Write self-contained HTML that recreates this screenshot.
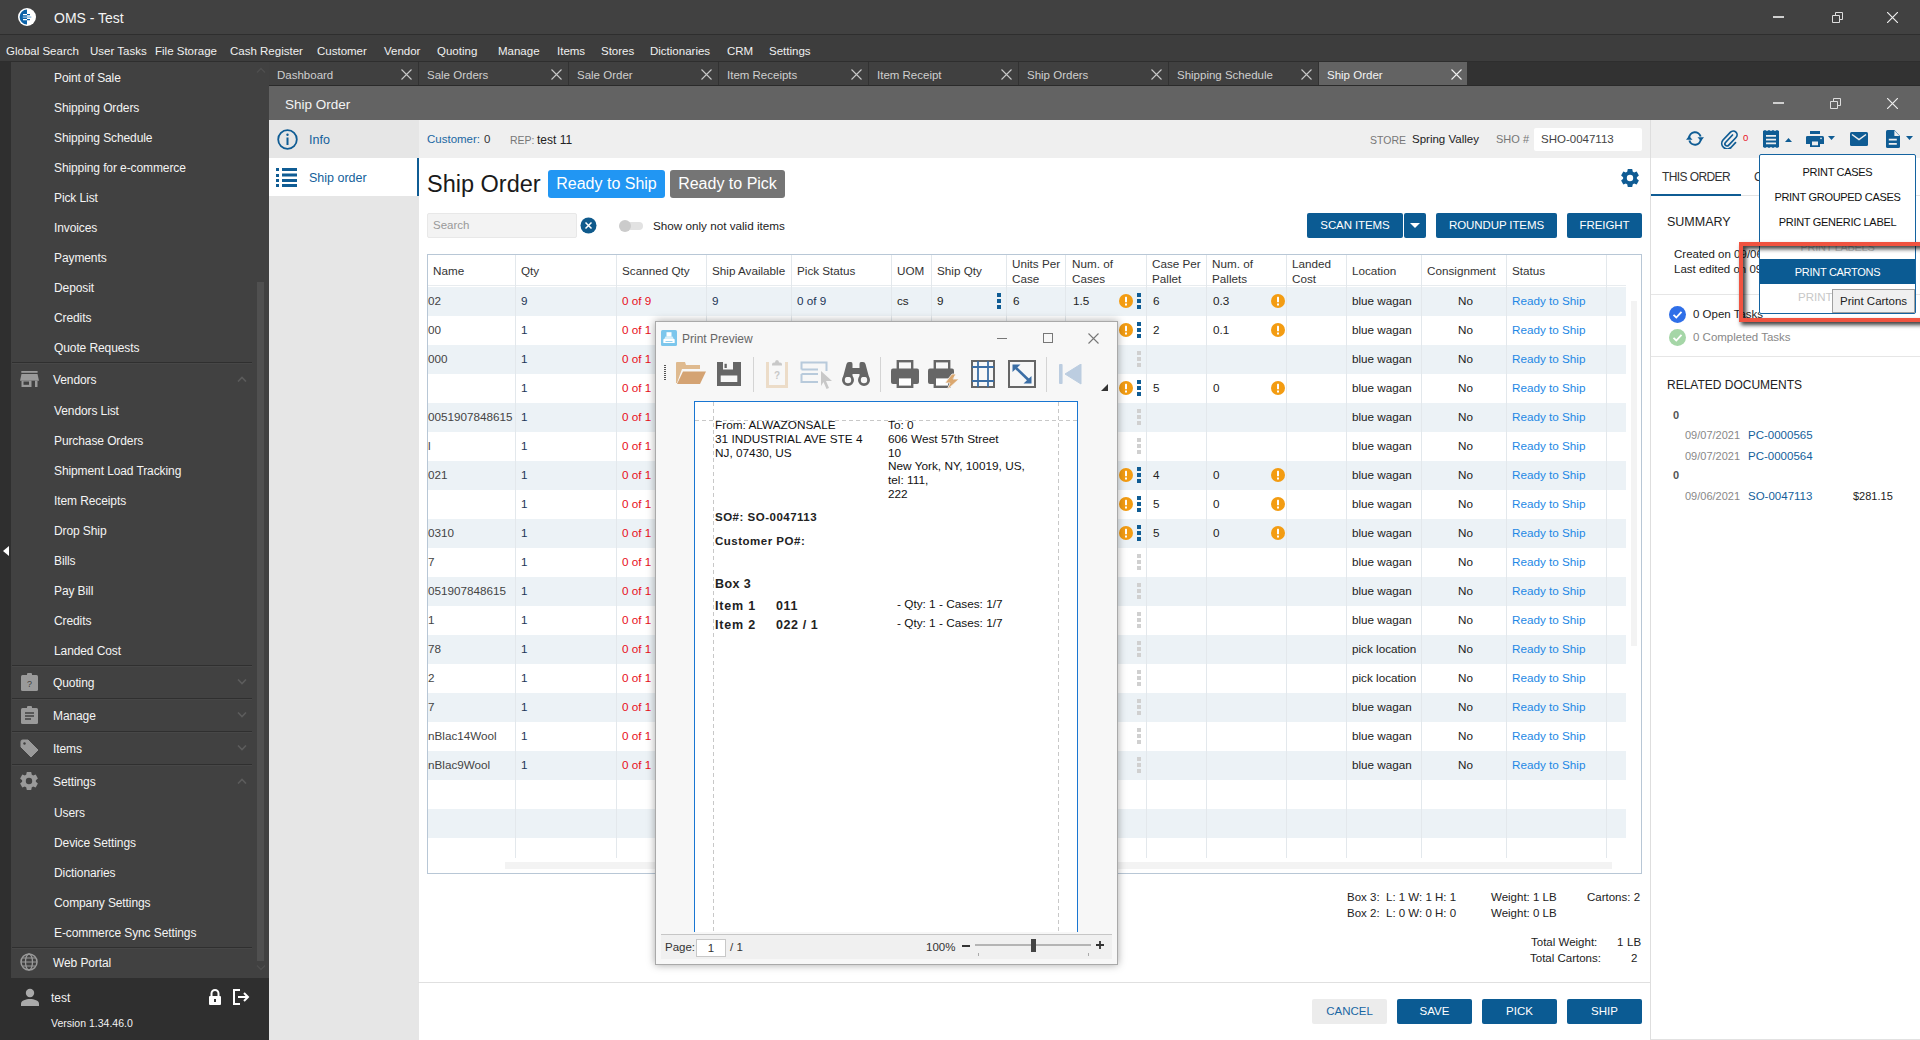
<!DOCTYPE html><html><head><meta charset="utf-8"><style>

*{margin:0;padding:0;box-sizing:border-box}
html,body{width:1920px;height:1040px;overflow:hidden;background:#fff;font-family:"Liberation Sans",sans-serif;font-size:12px;color:#222}
.a{position:absolute}
.t{position:absolute;white-space:nowrap;line-height:1}
#title{left:0;top:0;width:1920px;height:35px;background:#414141;border-bottom:1px solid #2e2e2e}
#menu{left:0;top:35px;width:1920px;height:27px;background:#3d3d3d;border-bottom:1px solid #2e2e2e}
#menu .t{color:#f0f0f0;font-size:11.5px;top:11px}
#strip{left:0;top:62px;width:11px;height:978px;background:#2f2f2f}
#side{left:11px;top:62px;width:258px;height:916px;background:#414141;overflow:hidden}
#side .t{color:#f4f4f4;font-size:12px;letter-spacing:-0.1px}
#side .sep{position:absolute;left:1px;width:240px;height:2px;border-top:1px solid #2f2f2f;border-bottom:1px solid #474747}
#user{left:11px;top:978px;width:258px;height:62px;background:#2f2f2f}
#tabs{left:269px;top:62px;width:1651px;height:24px;background:#323232;border-bottom:1px solid #2a2a2a}
.tab{position:absolute;top:0;height:23px;width:149px;background:#404040}
.tab .t{left:8px;top:8px;font-size:11.5px;color:#cfcfcf}
.tab svg{position:absolute;left:132px;top:7px}
#whdr{left:269px;top:86px;width:1651px;height:34px;background:#636363}


#nav{left:269px;top:120px;width:150px;height:920px;background:#e6e6e6}
#hstrip{left:419px;top:120px;width:1231px;height:38px;background:#efefef}
.btn{position:absolute;background:#0b5b93;color:#fff;border-radius:2px;font-size:11.5px;letter-spacing:-0.1px;text-align:center;line-height:25px;height:25px;top:213px}
.bbtn{position:absolute;background:#0b5b93;color:#fff;border-radius:2px;font-size:11.5px;text-align:center;line-height:25px;height:25px;top:999px}
#tbl{left:427px;top:254px;width:1215px;height:620px;border:1px solid #b8c7d6;background:#fff;overflow:hidden}
.row{position:absolute;left:0;width:1198px;height:29px}
.band{background:#ecf2f6}
.cl{position:absolute;top:0;width:1px;background:#e3e8ec}
.c{position:absolute;white-space:nowrap;line-height:1;font-size:11.7px;color:#222}
.hd{position:absolute;white-space:nowrap;line-height:15px;font-size:11.7px;color:#333}


#rpanel{left:1650px;top:120px;width:270px;height:920px;background:#fff;border-left:1px solid #dedede;border-bottom:1px solid #e2e2e2}
#rhdr{left:1651px;top:120px;width:269px;height:38px;background:#efefef}
.dd{position:absolute;left:1759px;top:154px;width:157px;height:160px;background:#fff;border:1px solid #1463a0;border-radius:2px}
.ddi{position:absolute;left:0;width:155px;text-align:center;font-size:11px;letter-spacing:-0.3px;color:#111;line-height:1;white-space:nowrap}


#pp{left:655px;top:321px;width:463px;height:644px;background:#f7f7f7;border:1px solid #a9a9a9;box-shadow:0 0 8px rgba(0,0,0,0.35)}
#page{left:694px;top:401px;width:384px;height:531px;background:#fff;border:1px solid #1976d2;border-bottom:none}
.pt{position:absolute;white-space:nowrap;line-height:1;font-size:11.8px;color:#111;font-family:"Liberation Sans",sans-serif}
.pb{position:absolute;white-space:nowrap;line-height:1;font-size:11.5px;letter-spacing:0.5px;color:#222;font-weight:bold;font-family:"Liberation Sans",sans-serif}

</style></head><body>
<div id="title" class="a">
<svg class="a" style="left:18px;top:8px" width="18" height="18" viewBox="0 0 18 18"><circle cx="9" cy="9" r="9" fill="#fff"/><path d="M9 1.6A7.4 7.4 0 0 0 9 16.4Z" fill="#0b62a8"/><path d="M5 6.6h4M5 11.6h4" stroke="#fff" stroke-width="1.1"/><path d="M9 6.6h3M9 11.6h3" stroke="#0b62a8" stroke-width="1.1"/><path d="M4.8 9.1h8.5" stroke="#8fbde0" stroke-width="1.4"/></svg>
<div class="t" style="left:54px;top:11px;font-size:14px;color:#f4f4f4">OMS - Test</div>

<div class="a" style="left:1773px;top:16px;width:11px;height:2px;background:#cfcfcf"></div>
<svg class="a" style="left:1832px;top:12px" width="11" height="11"><path d="M0.5 3.5h7v7h-7z M3.5 3.5v-3h7v7h-3" fill="none" stroke="#ddd"/></svg>
<svg class="a" style="left:1887px;top:12px" width="11" height="11"><path d="M0 0L11 11M11 0L0 11" stroke="#eee" stroke-width="1.2"/></svg>
</div>
<div id="menu" class="a">
<div class="t" style="left:6px">Global Search</div>
<div class="t" style="left:90px">User Tasks</div>
<div class="t" style="left:155px">File Storage</div>
<div class="t" style="left:230px">Cash Register</div>
<div class="t" style="left:317px">Customer</div>
<div class="t" style="left:384px">Vendor</div>
<div class="t" style="left:437px">Quoting</div>
<div class="t" style="left:498px">Manage</div>
<div class="t" style="left:557px">Items</div>
<div class="t" style="left:601px">Stores</div>
<div class="t" style="left:650px">Dictionaries</div>
<div class="t" style="left:727px">CRM</div>
<div class="t" style="left:769px">Settings</div>
</div>
<div id="strip" class="a"><svg class="a" style="left:3px;top:484px" width="6" height="10"><path d="M6 0L0 5L6 10Z" fill="#fff"/></svg></div>
<div id="side" class="a">
<div class="t" style="left:43px;top:10px;">Point of Sale</div>

<div class="t" style="left:43px;top:40px;">Shipping Orders</div>

<div class="t" style="left:43px;top:70px;">Shipping Schedule</div>

<div class="t" style="left:43px;top:100px;">Shipping for e-commerce</div>

<div class="t" style="left:43px;top:130px;">Pick List</div>

<div class="t" style="left:43px;top:160px;">Invoices</div>

<div class="t" style="left:43px;top:190px;">Payments</div>

<div class="t" style="left:43px;top:220px;">Deposit</div>

<div class="t" style="left:43px;top:250px;">Credits</div>

<div class="t" style="left:43px;top:280px;">Quote Requests</div>

<div class="t" style="left:43px;top:343px;">Vendors List</div>

<div class="t" style="left:43px;top:373px;">Purchase Orders</div>

<div class="t" style="left:43px;top:403px;">Shipment Load Tracking</div>

<div class="t" style="left:43px;top:433px;">Item Receipts</div>

<div class="t" style="left:43px;top:463px;">Drop Ship</div>

<div class="t" style="left:43px;top:493px;">Bills</div>

<div class="t" style="left:43px;top:523px;">Pay Bill</div>

<div class="t" style="left:43px;top:553px;">Credits</div>

<div class="t" style="left:43px;top:583px;">Landed Cost</div>

<div class="t" style="left:43px;top:745px;">Users</div>

<div class="t" style="left:43px;top:775px;">Device Settings</div>

<div class="t" style="left:43px;top:805px;">Dictionaries</div>

<div class="t" style="left:43px;top:835px;">Company Settings</div>

<div class="t" style="left:43px;top:865px;">E-commerce Sync Settings</div>

<div class="sep" style="top:300px"></div>
<div class="sep" style="top:603px"></div>
<div class="sep" style="top:636px"></div>
<div class="sep" style="top:669px"></div>
<div class="sep" style="top:702px"></div>
<div class="sep" style="top:885px"></div>
<div class="t" style="left:42px;top:312px;font-size:12px">Vendors</div>

<svg class="a" style="left:226px;top:314px" width="10" height="6"><path d="M1 5.5L5 1.5L9 5.5" fill="none" stroke="#5c5c5c" stroke-width="1.6"/></svg>
<div class="t" style="left:42px;top:615px;font-size:12px">Quoting</div>

<svg class="a" style="left:226px;top:617px" width="10" height="6"><path d="M1 0.5L5 4.5L9 0.5" fill="none" stroke="#5c5c5c" stroke-width="1.6"/></svg>
<div class="t" style="left:42px;top:648px;font-size:12px">Manage</div>

<svg class="a" style="left:226px;top:650px" width="10" height="6"><path d="M1 0.5L5 4.5L9 0.5" fill="none" stroke="#5c5c5c" stroke-width="1.6"/></svg>
<div class="t" style="left:42px;top:681px;font-size:12px">Items</div>

<svg class="a" style="left:226px;top:683px" width="10" height="6"><path d="M1 0.5L5 4.5L9 0.5" fill="none" stroke="#5c5c5c" stroke-width="1.6"/></svg>
<div class="t" style="left:42px;top:714px;font-size:12px">Settings</div>

<svg class="a" style="left:226px;top:716px" width="10" height="6"><path d="M1 5.5L5 1.5L9 5.5" fill="none" stroke="#5c5c5c" stroke-width="1.6"/></svg>
<div class="t" style="left:42px;top:895px;font-size:12px">Web Portal</div>

<svg class="a" style="left:9px;top:308px" width="20" height="18" viewBox="0 0 20 18"><rect x="1.3" y="1" width="16.3" height="1.8" fill="#9a9a9a"/><path d="M1.5 4H17.5L19 10.8H0Z" fill="#9a9a9a"/><path d="M1.5 10.8H17.5V17H1.5Z" fill="#9a9a9a"/><rect x="3.5" y="11.5" width="5.5" height="3.3" fill="#414141"/><rect x="11.5" y="10.8" width="3.5" height="6.2" fill="#414141"/></svg>
<svg class="a" style="left:10px;top:611px" width="17" height="18" viewBox="0 0 17 18"><rect x="0" y="2" width="17" height="16" rx="1.5" fill="#9a9a9a"/><rect x="6" y="0" width="5" height="4" rx="1" fill="#9a9a9a"/><text x="8.5" y="14" font-size="9" text-anchor="middle" fill="#414141" font-family="Liberation Sans">?</text></svg>
<svg class="a" style="left:10px;top:644px" width="17" height="18" viewBox="0 0 17 18"><rect x="0" y="2" width="17" height="16" rx="1.5" fill="#9a9a9a"/><rect x="6" y="0" width="5" height="4" rx="1" fill="#9a9a9a"/><path d="M4 7h9M4 10h9M4 13h6" stroke="#414141" stroke-width="1.3"/></svg>
<svg class="a" style="left:9px;top:677px" width="19" height="19" viewBox="0 0 19 19"><path d="M1 2.5Q1 1 2.5 1H8L18 11L11 18L1 8Z" fill="#9a9a9a" stroke="#9a9a9a" stroke-linejoin="round"/><circle cx="4.5" cy="4.5" r="1.2" fill="#414141"/></svg>
<svg class="a" style="left:9px;top:710px" width="18" height="18" viewBox="0 0 18 18"><path fill-rule="evenodd" fill="#9a9a9a" d="M6.20 2.69L6.80 -0.00L11.20 0.00L11.80 2.69A6.9 6.9 0 0 1 13.06 3.42L15.69 2.59L17.89 6.41L15.86 8.27A6.9 6.9 0 0 1 15.86 9.73L17.89 11.59L15.69 15.41L13.06 14.58A6.9 6.9 0 0 1 11.80 15.31L11.20 18.00L6.80 18.00L6.20 15.31A6.9 6.9 0 0 1 4.94 14.58L2.31 15.41L0.11 11.59L2.14 9.73A6.9 6.9 0 0 1 2.14 8.27L0.11 6.41L2.31 2.59L4.94 3.42A6.9 6.9 0 0 1 6.20 2.69ZM12.20 9.00A3.2 3.2 0 1 0 5.80 9.00A3.2 3.2 0 1 0 12.20 9.00Z"/></svg>
<svg class="a" style="left:9px;top:891px" width="18" height="18" viewBox="0 0 18 18"><circle cx="9" cy="9" r="8" fill="none" stroke="#9a9a9a" stroke-width="1.5"/><ellipse cx="9" cy="9" rx="3.5" ry="8" fill="none" stroke="#9a9a9a" stroke-width="1.3"/><path d="M1 9h16M2.5 5h13M2.5 13h13" stroke="#9a9a9a" stroke-width="1.2"/></svg>
<div class="a" style="left:246px;top:220px;width:7px;height:679px;background:#505050"></div><svg class="a" style="left:245px;top:903px" width="10" height="6"><path d="M1 0.5L5 4.5L9 0.5" fill="none" stroke="#4e4e4e" stroke-width="1.4"/></svg>
<svg class="a" style="left:245px;top:5px" width="10" height="6"><path d="M1 5.5L5 1.5L9 5.5" fill="none" stroke="#4e4e4e" stroke-width="1.4"/></svg>
</div>
<div id="user" class="a">
<svg class="a" style="left:10px;top:10px" width="18" height="18" viewBox="0 0 18 18"><circle cx="9" cy="5" r="4.2" fill="#aaa"/><path d="M0 18v-2.5C0 12.5 5 11 9 11s9 1.5 9 4.5V18z" fill="#aaa"/></svg>
<div class="t" style="left:40px;top:14px;color:#f2f2f2;font-size:12px">test</div>

<div class="t" style="left:40px;top:40px;color:#f2f2f2;font-size:10.5px">Version 1.34.46.0</div>

<svg class="a" style="left:197px;top:11px" width="14" height="16" viewBox="0 0 14 16"><path d="M3.5 7V4.5a3.5 3.5 0 0 1 7 0V7" fill="none" stroke="#fff" stroke-width="2"/><rect x="1" y="7" width="12" height="9" rx="1" fill="#fff"/><rect x="6" y="10" width="2" height="3" fill="#333"/></svg>
<svg class="a" style="left:222px;top:11px" width="18" height="16" viewBox="0 0 18 16"><path d="M7 1H1v14h6" fill="none" stroke="#fff" stroke-width="2"/><path d="M5 8h10M11 4l4 4-4 4" fill="none" stroke="#fff" stroke-width="2"/></svg>
</div>
<div id="tabs" class="a">
<div class="tab" style="left:0px;width:149px;background:#404040"><div class="t" style="color:#cfcfcf">Dashboard</div><svg width="11" height="11"><path d="M0.5 0.5L10.5 10.5M10.5 0.5L0.5 10.5" stroke="#c8c8c8" stroke-width="1.1"/></svg></div>
<div class="tab" style="left:150px;width:149px;background:#404040"><div class="t" style="color:#cfcfcf">Sale Orders</div><svg width="11" height="11"><path d="M0.5 0.5L10.5 10.5M10.5 0.5L0.5 10.5" stroke="#c8c8c8" stroke-width="1.1"/></svg></div>
<div class="tab" style="left:300px;width:149px;background:#404040"><div class="t" style="color:#cfcfcf">Sale Order</div><svg width="11" height="11"><path d="M0.5 0.5L10.5 10.5M10.5 0.5L0.5 10.5" stroke="#c8c8c8" stroke-width="1.1"/></svg></div>
<div class="tab" style="left:450px;width:149px;background:#404040"><div class="t" style="color:#cfcfcf">Item Receipts</div><svg width="11" height="11"><path d="M0.5 0.5L10.5 10.5M10.5 0.5L0.5 10.5" stroke="#c8c8c8" stroke-width="1.1"/></svg></div>
<div class="tab" style="left:600px;width:149px;background:#404040"><div class="t" style="color:#cfcfcf">Item Receipt</div><svg width="11" height="11"><path d="M0.5 0.5L10.5 10.5M10.5 0.5L0.5 10.5" stroke="#c8c8c8" stroke-width="1.1"/></svg></div>
<div class="tab" style="left:750px;width:149px;background:#404040"><div class="t" style="color:#cfcfcf">Ship Orders</div><svg width="11" height="11"><path d="M0.5 0.5L10.5 10.5M10.5 0.5L0.5 10.5" stroke="#c8c8c8" stroke-width="1.1"/></svg></div>
<div class="tab" style="left:900px;width:149px;background:#404040"><div class="t" style="color:#cfcfcf">Shipping Schedule</div><svg width="11" height="11"><path d="M0.5 0.5L10.5 10.5M10.5 0.5L0.5 10.5" stroke="#c8c8c8" stroke-width="1.1"/></svg></div>
<div class="tab" style="left:1050px;width:148px;background:#636363"><div class="t" style="color:#f4f4f4">Ship Order</div><svg width="11" height="11"><path d="M0.5 0.5L10.5 10.5M10.5 0.5L0.5 10.5" stroke="#f0f0f0" stroke-width="1.1"/></svg></div>
</div>
<div id="whdr" class="a">
<div class="t" style="left:16px;top:12px;font-size:13.5px;color:#f4f4f4">Ship Order</div>

<div class="a" style="left:1504px;top:16px;width:11px;height:2px;background:#cfcfcf"></div>
<svg class="a" style="left:1561px;top:12px" width="11" height="11"><path d="M0.5 3.5h7v7h-7z M3.5 3.5v-3h7v7h-3" fill="none" stroke="#ddd"/></svg>
<svg class="a" style="left:1618px;top:12px" width="11" height="11"><path d="M0 0L11 11M11 0L0 11" stroke="#eee" stroke-width="1.2"/></svg>
</div>
<div id="nav" class="a">
<svg class="a" style="left:8px;top:9px" width="21" height="21" viewBox="0 0 21 21"><circle cx="10.5" cy="10.5" r="9.3" fill="none" stroke="#0f5c94" stroke-width="1.8"/><rect x="9.5" y="8.5" width="2" height="7.5" fill="#0f5c94"/><circle cx="10.5" cy="5.8" r="1.2" fill="#0f5c94"/></svg>
<div class="t" style="left:40px;top:14px;font-size:12.5px;color:#145f9b">Info</div>

<div class="a" style="left:0;top:38px;width:150px;height:38px;background:#fff;border-right:2px solid #0f5c94"></div>
<svg class="a" style="left:7px;top:47px" width="21" height="20" viewBox="0 0 21 20"><g fill="#0f5c94"><rect x="0" y="1" width="3" height="3"/><rect x="0" y="7" width="3" height="3"/><rect x="0" y="12" width="3" height="3"/><rect x="0" y="17" width="3" height="3"/><rect x="6" y="1" width="15" height="3"/><rect x="6" y="6.5" width="15" height="3"/><rect x="6" y="12" width="15" height="3"/><rect x="6" y="17" width="15" height="3"/></g></svg>
<div class="t" style="left:40px;top:52px;font-size:12.5px;color:#145f9b">Ship order</div>

</div>
<div id="hstrip" class="a">
<div class="t" style="left:8px;top:14px;font-size:11.5px;color:#1a67a3">Customer:</div>

<div class="t" style="left:65px;top:14px;font-size:11.5px;color:#333">0</div>

<div class="t" style="left:91px;top:15px;font-size:10.5px;color:#777">REP:</div>

<div class="t" style="left:118px;top:14px;font-size:12px;color:#222">test 11</div>

<div class="t" style="left:951px;top:15px;font-size:10.5px;color:#777">STORE</div>

<div class="t" style="left:993px;top:14px;font-size:11.5px;color:#222">Spring Valley</div>

<div class="t" style="left:1077px;top:14px;font-size:11px;color:#777">SHO #</div>

<div class="a" style="left:1115px;top:8px;width:108px;height:23px;background:#fff;border-radius:2px"></div>
<div class="t" style="left:1122px;top:14px;font-size:11.5px;color:#444">SHO-0047113</div>

</div>
<div class="t" style="left:427px;top:173px;font-size:23.5px;color:#1a1a1a">Ship Order</div>

<div class="a" style="left:548px;top:170px;width:117px;height:28px;background:#2196f3;border-radius:3px;color:#fff;font-size:16px;line-height:28px;text-align:center">Ready to Ship</div>
<div class="a" style="left:670px;top:170px;width:115px;height:28px;background:#757575;border-radius:3px;color:#fff;font-size:16px;line-height:28px;text-align:center">Ready to Pick</div>
<svg class="a" style="left:1621px;top:169px" width="18" height="18" viewBox="0 0 18 18"><path fill-rule="evenodd" fill="#0f5c94" d="M6.20 2.69L6.80 -0.00L11.20 0.00L11.80 2.69A6.9 6.9 0 0 1 13.06 3.42L15.69 2.59L17.89 6.41L15.86 8.27A6.9 6.9 0 0 1 15.86 9.73L17.89 11.59L15.69 15.41L13.06 14.58A6.9 6.9 0 0 1 11.80 15.31L11.20 18.00L6.80 18.00L6.20 15.31A6.9 6.9 0 0 1 4.94 14.58L2.31 15.41L0.11 11.59L2.14 9.73A6.9 6.9 0 0 1 2.14 8.27L0.11 6.41L2.31 2.59L4.94 3.42A6.9 6.9 0 0 1 6.20 2.69ZM12.20 9.00A3.2 3.2 0 1 0 5.80 9.00A3.2 3.2 0 1 0 12.20 9.00Z"/></svg>
<div class="a" style="left:427px;top:213px;width:150px;height:25px;background:#f3f3f3;border:1px solid #e8e8e8;border-radius:2px"></div>
<div class="t" style="left:433px;top:220px;font-size:11.5px;color:#999">Search</div>

<svg class="a" style="left:580px;top:217px" width="17" height="17" viewBox="0 0 17 17"><circle cx="8.5" cy="8.5" r="8" fill="#0f5a8c"/><path d="M5.5 5.5L11.5 11.5M11.5 5.5L5.5 11.5" stroke="#fff" stroke-width="1.5"/></svg>
<div class="a" style="left:621px;top:222px;width:22px;height:8px;background:#e2e2e2;border-radius:4px"></div>
<div class="a" style="left:619px;top:220px;width:12px;height:12px;background:#cbcbcb;border-radius:6px"></div>
<div class="t" style="left:653px;top:220px;font-size:11.7px;color:#222">Show only not valid items</div>

<div class="btn" style="left:1307px;width:96px">SCAN ITEMS</div>
<div class="btn" style="left:1404px;width:22px"><svg width="10" height="6" style="position:absolute;left:6px;top:10px"><path d="M0 0h10L5 5z" fill="#fff"/></svg></div>
<div class="btn" style="left:1436px;width:121px">ROUNDUP ITEMS</div>
<div class="btn" style="left:1567px;width:75px">FREIGHT</div>
<div id="tbl" class="a">
<div class="a" style="left:0;top:30px;width:1198px;height:1px;background:#e8ecef"></div>
<div class="row band" style="top:32px"></div>
<div class="row band" style="top:90px"></div>
<div class="row band" style="top:148px"></div>
<div class="row band" style="top:206px"></div>
<div class="row band" style="top:264px"></div>
<div class="row band" style="top:322px"></div>
<div class="row band" style="top:380px"></div>
<div class="row band" style="top:438px"></div>
<div class="row band" style="top:496px"></div>
<div class="row band" style="top:554px"></div>
<div class="cl" style="left:87px;height:603px"></div>
<div class="cl" style="left:188px;height:603px"></div>
<div class="cl" style="left:278px;height:603px"></div>
<div class="cl" style="left:363px;height:603px"></div>
<div class="cl" style="left:463px;height:603px"></div>
<div class="cl" style="left:503px;height:603px"></div>
<div class="cl" style="left:578px;height:603px"></div>
<div class="cl" style="left:637px;height:603px"></div>
<div class="cl" style="left:718px;height:603px"></div>
<div class="cl" style="left:778px;height:603px"></div>
<div class="cl" style="left:858px;height:603px"></div>
<div class="cl" style="left:918px;height:603px"></div>
<div class="cl" style="left:993px;height:603px"></div>
<div class="cl" style="left:1078px;height:603px"></div>
<div class="cl" style="left:1178px;height:603px"></div>
<div class="hd" style="left:5px;top:8px">Name</div>
<div class="hd" style="left:93px;top:8px">Qty</div>
<div class="hd" style="left:194px;top:8px">Scanned Qty</div>
<div class="hd" style="left:284px;top:8px">Ship Available</div>
<div class="hd" style="left:369px;top:8px">Pick Status</div>
<div class="hd" style="left:469px;top:8px">UOM</div>
<div class="hd" style="left:509px;top:8px">Ship Qty</div>
<div class="hd" style="left:584px;top:1px">Units Per<br>Case</div>
<div class="hd" style="left:644px;top:1px">Num. of<br>Cases</div>
<div class="hd" style="left:724px;top:1px">Case Per<br>Pallet</div>
<div class="hd" style="left:784px;top:1px">Num. of<br>Pallets</div>
<div class="hd" style="left:864px;top:1px">Landed<br>Cost</div>
<div class="hd" style="left:924px;top:8px">Location</div>
<div class="hd" style="left:999px;top:8px">Consignment</div>
<div class="hd" style="left:1084px;top:8px">Status</div>
<div class="c" style="left:0px;top:40px;color:#444">02</div>
<div class="c" style="left:93px;top:40px;color:#1d3557">9</div>
<div class="c" style="left:194px;top:40px;color:#e8101a">0 of 9</div>
<div class="c" style="left:284px;top:40px;color:#1d3557">9</div>
<div class="c" style="left:369px;top:40px;color:#1d3557">0 of 9</div>
<div class="c" style="left:469px;top:40px">cs</div>
<div class="c" style="left:509px;top:40px">9</div>
<div class="a" style="left:569px;top:38px;width:4px;height:16px;background:linear-gradient(#0f5c94 0 4px,transparent 4px 6px,#0f5c94 6px 10px,transparent 10px 12px,#0f5c94 12px 16px)"></div>
<div class="c" style="left:585px;top:40px">6</div>
<div class="c" style="left:645px;top:40px">1.5</div>
<svg class="a" style="left:691px;top:39px" width="14" height="14" viewBox="0 0 14 14"><circle cx="7" cy="7" r="7" fill="#f39c12"/><rect x="6" y="2.8" width="2" height="5.5" rx="0.5" fill="#fff"/><rect x="6" y="9.5" width="2" height="2" fill="#fff"/></svg>
<div class="a" style="left:709px;top:38px;width:4px;height:16px;background:linear-gradient(#0f5c94 0 4px,transparent 4px 6px,#0f5c94 6px 10px,transparent 10px 12px,#0f5c94 12px 16px)"></div>
<div class="c" style="left:725px;top:40px">6</div>
<div class="c" style="left:785px;top:40px">0.3</div>
<svg class="a" style="left:843px;top:39px" width="14" height="14" viewBox="0 0 14 14"><circle cx="7" cy="7" r="7" fill="#f39c12"/><rect x="6" y="2.8" width="2" height="5.5" rx="0.5" fill="#fff"/><rect x="6" y="9.5" width="2" height="2" fill="#fff"/></svg>
<div class="c" style="left:924px;top:40px">blue wagan</div>
<div class="c" style="left:1030px;top:40px">No</div>
<div class="c" style="left:1084px;top:40px;color:#1e88e5">Ready to Ship</div>
<div class="c" style="left:0px;top:69px;color:#444">00</div>
<div class="c" style="left:93px;top:69px;color:#1d3557">1</div>
<div class="c" style="left:194px;top:69px;color:#e8101a">0 of 1</div>
<svg class="a" style="left:691px;top:68px" width="14" height="14" viewBox="0 0 14 14"><circle cx="7" cy="7" r="7" fill="#f39c12"/><rect x="6" y="2.8" width="2" height="5.5" rx="0.5" fill="#fff"/><rect x="6" y="9.5" width="2" height="2" fill="#fff"/></svg>
<div class="a" style="left:709px;top:67px;width:4px;height:16px;background:linear-gradient(#0f5c94 0 4px,transparent 4px 6px,#0f5c94 6px 10px,transparent 10px 12px,#0f5c94 12px 16px)"></div>
<div class="c" style="left:725px;top:69px">2</div>
<div class="c" style="left:785px;top:69px">0.1</div>
<svg class="a" style="left:843px;top:68px" width="14" height="14" viewBox="0 0 14 14"><circle cx="7" cy="7" r="7" fill="#f39c12"/><rect x="6" y="2.8" width="2" height="5.5" rx="0.5" fill="#fff"/><rect x="6" y="9.5" width="2" height="2" fill="#fff"/></svg>
<div class="c" style="left:924px;top:69px">blue wagan</div>
<div class="c" style="left:1030px;top:69px">No</div>
<div class="c" style="left:1084px;top:69px;color:#1e88e5">Ready to Ship</div>
<div class="c" style="left:0px;top:98px;color:#444">000</div>
<div class="c" style="left:93px;top:98px;color:#1d3557">1</div>
<div class="c" style="left:194px;top:98px;color:#e8101a">0 of 1</div>
<div class="a" style="left:709px;top:96px;width:4px;height:16px;background:linear-gradient(#d0d0d0 0 4px,transparent 4px 6px,#d0d0d0 6px 10px,transparent 10px 12px,#d0d0d0 12px 16px)"></div>
<div class="c" style="left:924px;top:98px">blue wagan</div>
<div class="c" style="left:1030px;top:98px">No</div>
<div class="c" style="left:1084px;top:98px;color:#1e88e5">Ready to Ship</div>
<div class="c" style="left:93px;top:127px;color:#1d3557">1</div>
<div class="c" style="left:194px;top:127px;color:#e8101a">0 of 1</div>
<svg class="a" style="left:691px;top:126px" width="14" height="14" viewBox="0 0 14 14"><circle cx="7" cy="7" r="7" fill="#f39c12"/><rect x="6" y="2.8" width="2" height="5.5" rx="0.5" fill="#fff"/><rect x="6" y="9.5" width="2" height="2" fill="#fff"/></svg>
<div class="a" style="left:709px;top:125px;width:4px;height:16px;background:linear-gradient(#0f5c94 0 4px,transparent 4px 6px,#0f5c94 6px 10px,transparent 10px 12px,#0f5c94 12px 16px)"></div>
<div class="c" style="left:725px;top:127px">5</div>
<div class="c" style="left:785px;top:127px">0</div>
<svg class="a" style="left:843px;top:126px" width="14" height="14" viewBox="0 0 14 14"><circle cx="7" cy="7" r="7" fill="#f39c12"/><rect x="6" y="2.8" width="2" height="5.5" rx="0.5" fill="#fff"/><rect x="6" y="9.5" width="2" height="2" fill="#fff"/></svg>
<div class="c" style="left:924px;top:127px">blue wagan</div>
<div class="c" style="left:1030px;top:127px">No</div>
<div class="c" style="left:1084px;top:127px;color:#1e88e5">Ready to Ship</div>
<div class="c" style="left:0px;top:156px;color:#444">0051907848615</div>
<div class="c" style="left:93px;top:156px;color:#1d3557">1</div>
<div class="c" style="left:194px;top:156px;color:#e8101a">0 of 1</div>
<div class="a" style="left:709px;top:154px;width:4px;height:16px;background:linear-gradient(#d0d0d0 0 4px,transparent 4px 6px,#d0d0d0 6px 10px,transparent 10px 12px,#d0d0d0 12px 16px)"></div>
<div class="c" style="left:924px;top:156px">blue wagan</div>
<div class="c" style="left:1030px;top:156px">No</div>
<div class="c" style="left:1084px;top:156px;color:#1e88e5">Ready to Ship</div>
<div class="c" style="left:0px;top:185px;color:#444">l</div>
<div class="c" style="left:93px;top:185px;color:#1d3557">1</div>
<div class="c" style="left:194px;top:185px;color:#e8101a">0 of 1</div>
<div class="a" style="left:709px;top:183px;width:4px;height:16px;background:linear-gradient(#d0d0d0 0 4px,transparent 4px 6px,#d0d0d0 6px 10px,transparent 10px 12px,#d0d0d0 12px 16px)"></div>
<div class="c" style="left:924px;top:185px">blue wagan</div>
<div class="c" style="left:1030px;top:185px">No</div>
<div class="c" style="left:1084px;top:185px;color:#1e88e5">Ready to Ship</div>
<div class="c" style="left:0px;top:214px;color:#444">021</div>
<div class="c" style="left:93px;top:214px;color:#1d3557">1</div>
<div class="c" style="left:194px;top:214px;color:#e8101a">0 of 1</div>
<svg class="a" style="left:691px;top:213px" width="14" height="14" viewBox="0 0 14 14"><circle cx="7" cy="7" r="7" fill="#f39c12"/><rect x="6" y="2.8" width="2" height="5.5" rx="0.5" fill="#fff"/><rect x="6" y="9.5" width="2" height="2" fill="#fff"/></svg>
<div class="a" style="left:709px;top:212px;width:4px;height:16px;background:linear-gradient(#0f5c94 0 4px,transparent 4px 6px,#0f5c94 6px 10px,transparent 10px 12px,#0f5c94 12px 16px)"></div>
<div class="c" style="left:725px;top:214px">4</div>
<div class="c" style="left:785px;top:214px">0</div>
<svg class="a" style="left:843px;top:213px" width="14" height="14" viewBox="0 0 14 14"><circle cx="7" cy="7" r="7" fill="#f39c12"/><rect x="6" y="2.8" width="2" height="5.5" rx="0.5" fill="#fff"/><rect x="6" y="9.5" width="2" height="2" fill="#fff"/></svg>
<div class="c" style="left:924px;top:214px">blue wagan</div>
<div class="c" style="left:1030px;top:214px">No</div>
<div class="c" style="left:1084px;top:214px;color:#1e88e5">Ready to Ship</div>
<div class="c" style="left:93px;top:243px;color:#1d3557">1</div>
<div class="c" style="left:194px;top:243px;color:#e8101a">0 of 1</div>
<svg class="a" style="left:691px;top:242px" width="14" height="14" viewBox="0 0 14 14"><circle cx="7" cy="7" r="7" fill="#f39c12"/><rect x="6" y="2.8" width="2" height="5.5" rx="0.5" fill="#fff"/><rect x="6" y="9.5" width="2" height="2" fill="#fff"/></svg>
<div class="a" style="left:709px;top:241px;width:4px;height:16px;background:linear-gradient(#0f5c94 0 4px,transparent 4px 6px,#0f5c94 6px 10px,transparent 10px 12px,#0f5c94 12px 16px)"></div>
<div class="c" style="left:725px;top:243px">5</div>
<div class="c" style="left:785px;top:243px">0</div>
<svg class="a" style="left:843px;top:242px" width="14" height="14" viewBox="0 0 14 14"><circle cx="7" cy="7" r="7" fill="#f39c12"/><rect x="6" y="2.8" width="2" height="5.5" rx="0.5" fill="#fff"/><rect x="6" y="9.5" width="2" height="2" fill="#fff"/></svg>
<div class="c" style="left:924px;top:243px">blue wagan</div>
<div class="c" style="left:1030px;top:243px">No</div>
<div class="c" style="left:1084px;top:243px;color:#1e88e5">Ready to Ship</div>
<div class="c" style="left:0px;top:272px;color:#444">0310</div>
<div class="c" style="left:93px;top:272px;color:#1d3557">1</div>
<div class="c" style="left:194px;top:272px;color:#e8101a">0 of 1</div>
<svg class="a" style="left:691px;top:271px" width="14" height="14" viewBox="0 0 14 14"><circle cx="7" cy="7" r="7" fill="#f39c12"/><rect x="6" y="2.8" width="2" height="5.5" rx="0.5" fill="#fff"/><rect x="6" y="9.5" width="2" height="2" fill="#fff"/></svg>
<div class="a" style="left:709px;top:270px;width:4px;height:16px;background:linear-gradient(#0f5c94 0 4px,transparent 4px 6px,#0f5c94 6px 10px,transparent 10px 12px,#0f5c94 12px 16px)"></div>
<div class="c" style="left:725px;top:272px">5</div>
<div class="c" style="left:785px;top:272px">0</div>
<svg class="a" style="left:843px;top:271px" width="14" height="14" viewBox="0 0 14 14"><circle cx="7" cy="7" r="7" fill="#f39c12"/><rect x="6" y="2.8" width="2" height="5.5" rx="0.5" fill="#fff"/><rect x="6" y="9.5" width="2" height="2" fill="#fff"/></svg>
<div class="c" style="left:924px;top:272px">blue wagan</div>
<div class="c" style="left:1030px;top:272px">No</div>
<div class="c" style="left:1084px;top:272px;color:#1e88e5">Ready to Ship</div>
<div class="c" style="left:0px;top:301px;color:#444">7</div>
<div class="c" style="left:93px;top:301px;color:#1d3557">1</div>
<div class="c" style="left:194px;top:301px;color:#e8101a">0 of 1</div>
<div class="a" style="left:709px;top:299px;width:4px;height:16px;background:linear-gradient(#d0d0d0 0 4px,transparent 4px 6px,#d0d0d0 6px 10px,transparent 10px 12px,#d0d0d0 12px 16px)"></div>
<div class="c" style="left:924px;top:301px">blue wagan</div>
<div class="c" style="left:1030px;top:301px">No</div>
<div class="c" style="left:1084px;top:301px;color:#1e88e5">Ready to Ship</div>
<div class="c" style="left:0px;top:330px;color:#444">051907848615</div>
<div class="c" style="left:93px;top:330px;color:#1d3557">1</div>
<div class="c" style="left:194px;top:330px;color:#e8101a">0 of 1</div>
<div class="a" style="left:709px;top:328px;width:4px;height:16px;background:linear-gradient(#d0d0d0 0 4px,transparent 4px 6px,#d0d0d0 6px 10px,transparent 10px 12px,#d0d0d0 12px 16px)"></div>
<div class="c" style="left:924px;top:330px">blue wagan</div>
<div class="c" style="left:1030px;top:330px">No</div>
<div class="c" style="left:1084px;top:330px;color:#1e88e5">Ready to Ship</div>
<div class="c" style="left:0px;top:359px;color:#444">1</div>
<div class="c" style="left:93px;top:359px;color:#1d3557">1</div>
<div class="c" style="left:194px;top:359px;color:#e8101a">0 of 1</div>
<div class="a" style="left:709px;top:357px;width:4px;height:16px;background:linear-gradient(#d0d0d0 0 4px,transparent 4px 6px,#d0d0d0 6px 10px,transparent 10px 12px,#d0d0d0 12px 16px)"></div>
<div class="c" style="left:924px;top:359px">blue wagan</div>
<div class="c" style="left:1030px;top:359px">No</div>
<div class="c" style="left:1084px;top:359px;color:#1e88e5">Ready to Ship</div>
<div class="c" style="left:0px;top:388px;color:#444">78</div>
<div class="c" style="left:93px;top:388px;color:#1d3557">1</div>
<div class="c" style="left:194px;top:388px;color:#e8101a">0 of 1</div>
<div class="a" style="left:709px;top:386px;width:4px;height:16px;background:linear-gradient(#d0d0d0 0 4px,transparent 4px 6px,#d0d0d0 6px 10px,transparent 10px 12px,#d0d0d0 12px 16px)"></div>
<div class="c" style="left:924px;top:388px">pick location</div>
<div class="c" style="left:1030px;top:388px">No</div>
<div class="c" style="left:1084px;top:388px;color:#1e88e5">Ready to Ship</div>
<div class="c" style="left:0px;top:417px;color:#444">2</div>
<div class="c" style="left:93px;top:417px;color:#1d3557">1</div>
<div class="c" style="left:194px;top:417px;color:#e8101a">0 of 1</div>
<div class="a" style="left:709px;top:415px;width:4px;height:16px;background:linear-gradient(#d0d0d0 0 4px,transparent 4px 6px,#d0d0d0 6px 10px,transparent 10px 12px,#d0d0d0 12px 16px)"></div>
<div class="c" style="left:924px;top:417px">pick location</div>
<div class="c" style="left:1030px;top:417px">No</div>
<div class="c" style="left:1084px;top:417px;color:#1e88e5">Ready to Ship</div>
<div class="c" style="left:0px;top:446px;color:#444">7</div>
<div class="c" style="left:93px;top:446px;color:#1d3557">1</div>
<div class="c" style="left:194px;top:446px;color:#e8101a">0 of 1</div>
<div class="a" style="left:709px;top:444px;width:4px;height:16px;background:linear-gradient(#d0d0d0 0 4px,transparent 4px 6px,#d0d0d0 6px 10px,transparent 10px 12px,#d0d0d0 12px 16px)"></div>
<div class="c" style="left:924px;top:446px">blue wagan</div>
<div class="c" style="left:1030px;top:446px">No</div>
<div class="c" style="left:1084px;top:446px;color:#1e88e5">Ready to Ship</div>
<div class="c" style="left:0px;top:475px;color:#444">nBlac14Wool</div>
<div class="c" style="left:93px;top:475px;color:#1d3557">1</div>
<div class="c" style="left:194px;top:475px;color:#e8101a">0 of 1</div>
<div class="a" style="left:709px;top:473px;width:4px;height:16px;background:linear-gradient(#d0d0d0 0 4px,transparent 4px 6px,#d0d0d0 6px 10px,transparent 10px 12px,#d0d0d0 12px 16px)"></div>
<div class="c" style="left:924px;top:475px">blue wagan</div>
<div class="c" style="left:1030px;top:475px">No</div>
<div class="c" style="left:1084px;top:475px;color:#1e88e5">Ready to Ship</div>
<div class="c" style="left:0px;top:504px;color:#444">nBlac9Wool</div>
<div class="c" style="left:93px;top:504px;color:#1d3557">1</div>
<div class="c" style="left:194px;top:504px;color:#e8101a">0 of 1</div>
<div class="a" style="left:709px;top:502px;width:4px;height:16px;background:linear-gradient(#d0d0d0 0 4px,transparent 4px 6px,#d0d0d0 6px 10px,transparent 10px 12px,#d0d0d0 12px 16px)"></div>
<div class="c" style="left:924px;top:504px">blue wagan</div>
<div class="c" style="left:1030px;top:504px">No</div>
<div class="c" style="left:1084px;top:504px;color:#1e88e5">Ready to Ship</div>
<div class="a" style="left:1203px;top:46px;width:6px;height:345px;background:#f3f3f3"></div>
<div class="a" style="left:77px;top:607px;width:1107px;height:7px;background:#f3f3f3"></div>
</div>
<div class="t" style="left:1347px;top:892px;font-size:11.5px;color:#222">Box 3:&nbsp; L: 1 W: 1 H: 1</div>

<div class="t" style="left:1347px;top:908px;font-size:11.5px;color:#222">Box 2:&nbsp; L: 0 W: 0 H: 0</div>

<div class="t" style="left:1491px;top:892px;font-size:11.5px;color:#222">Weight: 1 LB</div>

<div class="t" style="left:1491px;top:908px;font-size:11.5px;color:#222">Weight: 0 LB</div>

<div class="t" style="left:1587px;top:892px;font-size:11.5px;color:#222">Cartons: 2</div>

<div class="t" style="left:1531px;top:937px;font-size:11.5px;color:#222">Total Weight:</div>

<div class="t" style="left:1530px;top:953px;font-size:11.5px;color:#222">Total Cartons:</div>

<div class="t" style="left:1617px;top:937px;font-size:11.5px;color:#222">1</div>

<div class="t" style="left:1627px;top:937px;font-size:11.5px;color:#222">LB</div>

<div class="t" style="left:1631px;top:953px;font-size:11.5px;color:#222">2</div>

<div class="a" style="left:418px;top:982px;width:1232px;height:1px;background:#e0e0e0"></div>
<div class="a" style="left:1312px;top:999px;width:75px;height:25px;background:#ececec;border-radius:2px;color:#1a67a3;font-size:11.5px;line-height:25px;text-align:center">CANCEL</div>
<div class="bbtn" style="left:1397px;width:75px">SAVE</div>
<div class="bbtn" style="left:1482px;width:75px">PICK</div>
<div class="bbtn" style="left:1567px;width:75px">SHIP</div>
<div id="rpanel" class="a"></div>
<div id="rhdr" class="a"></div>
<svg class="a" style="left:1686px;top:131px" width="18" height="15" viewBox="0 0 18 15"><path d="M3.2 7A5.8 5.8 0 0 1 14.6 5.6" fill="none" stroke="#0f5c94" stroke-width="2"/><path d="M14.8 8A5.8 5.8 0 0 1 3.4 9.4" fill="none" stroke="#0f5c94" stroke-width="2"/><path d="M11.5 6.2L18 6.2L15 10Z" fill="#0f5c94"/><path d="M6.5 8.8L0 8.8L3 5Z" fill="#0f5c94"/></svg>
<svg class="a" style="left:1720px;top:129px" width="18" height="20" viewBox="0 0 18 20"><path d="M12.5 6L5.5 13.5a2 2 0 0 0 3 2.8L16 8.5a3.8 3.8 0 0 0-5.5-5.3L3 11a5.5 5.5 0 0 0 8 7.5l4.5-4.8" fill="none" stroke="#0f5c94" stroke-width="1.7" stroke-linecap="round"/></svg>
<div class="t" style="left:1743px;top:133px;font-size:9.5px;color:#e81123">0</div>

<svg class="a" style="left:1763px;top:130px" width="16" height="18" viewBox="0 0 16 18"><path d="M0 1L2 0L4 1L6 0L8 1L10 0L12 1L14 0L16 1V17L14 18L12 17L10 18L8 17L6 18L4 17L2 18L0 17Z" fill="#0f5c94"/><path d="M3 5.9h10M3 9.6h10M3 13.4h10" stroke="#efefef" stroke-width="1.7"/></svg>
<svg class="a" style="left:1785px;top:138px" width="7" height="4"><path d="M0 4L3.5 0L7 4z" fill="#0f5c94"/></svg>
<svg class="a" style="left:1806px;top:130px" width="18" height="17" viewBox="0 0 18 17"><rect x="4" y="1" width="10" height="3" fill="#0f5c94"/><path d="M0 7Q0 6 1.5 6H16.5Q18 6 18 7.5V14H0Z" fill="#0f5c94"/><rect x="4" y="11" width="10" height="6" fill="#0f5c94"/><rect x="6" y="11.5" width="6" height="3.8" fill="#efefef"/><circle cx="15" cy="8.4" r="0.8" fill="#efefef"/></svg>
<svg class="a" style="left:1828px;top:136px" width="7" height="4"><path d="M0 0h7L3.5 4z" fill="#0f5c94"/></svg>
<svg class="a" style="left:1850px;top:132px" width="18" height="14" viewBox="0 0 18 14"><rect x="0" y="0" width="18" height="14" rx="1.5" fill="#0f5c94"/><path d="M2 2.5L9 7.5L16 2.5" fill="none" stroke="#efefef" stroke-width="1.5"/></svg>
<svg class="a" style="left:1886px;top:130px" width="14" height="18" viewBox="0 0 14 18"><path d="M0 1.5Q0 0 1.5 0H8.4L14 5.9V16.5Q14 18 12.5 18H1.5Q0 18 0 16.5z" fill="#0f5c94"/><path d="M8.4 0.5V5.9H13.5Z" fill="#efefef"/><path d="M2.8 9.6h8M2.8 13.8h8" stroke="#efefef" stroke-width="1.7"/></svg>
<svg class="a" style="left:1906px;top:136px" width="7" height="4"><path d="M0 0h7L3.5 4z" fill="#0f5c94"/></svg>
<div class="t" style="left:1662px;top:171px;font-size:12px;letter-spacing:-0.6px;color:#333">THIS ORDER</div>

<div class="t" style="left:1754px;top:171px;font-size:12px;color:#333">C</div>

<div class="a" style="left:1651px;top:195px;width:269px;height:1px;background:#e3e3e3"></div>
<div class="a" style="left:1651px;top:194px;width:90px;height:2px;background:#0f5c94"></div>
<div class="t" style="left:1667px;top:216px;font-size:12.5px;color:#222">SUMMARY</div>

<div class="t" style="left:1674px;top:249px;font-size:11.5px;color:#222">Created on 09/06/2021</div>

<div class="t" style="left:1674px;top:264px;font-size:11.5px;color:#222">Last edited on 09/07/2021</div>

<div class="a" style="left:1651px;top:294px;width:269px;height:1px;background:#e6e6e6"></div>
<svg class="a" style="left:1669px;top:306px" width="17" height="17" viewBox="0 0 17 17"><circle cx="8.5" cy="8.5" r="8.5" fill="#2f6fe8"/><path d="M4.5 8.8L7.3 11.5L12.5 5.8" fill="none" stroke="#fff" stroke-width="1.8"/></svg>
<div class="t" style="left:1693px;top:309px;font-size:11.5px;color:#222">0 Open Tasks</div>

<svg class="a" style="left:1669px;top:329px" width="17" height="17" viewBox="0 0 17 17"><circle cx="8.5" cy="8.5" r="8.5" fill="#a5d6a7"/><path d="M4.5 8.8L7.3 11.5L12.5 5.8" fill="none" stroke="#fff" stroke-width="1.8"/></svg>
<div class="t" style="left:1693px;top:332px;font-size:11.5px;color:#888">0 Completed Tasks</div>

<div class="a" style="left:1651px;top:356px;width:269px;height:1px;background:#e6e6e6"></div>
<div class="t" style="left:1667px;top:379px;font-size:12px;color:#222">RELATED DOCUMENTS</div>

<div class="t" style="left:1673px;top:410px;font-size:11px;color:#555;font-weight:bold">0</div>

<div class="t" style="left:1685px;top:430px;font-size:11px;color:#888">09/07/2021</div>

<div class="t" style="left:1748px;top:430px;font-size:11.5px;color:#145f9b">PC-0000565</div>

<div class="t" style="left:1685px;top:451px;font-size:11px;color:#888">09/07/2021</div>

<div class="t" style="left:1748px;top:451px;font-size:11.5px;color:#145f9b">PC-0000564</div>

<div class="t" style="left:1673px;top:470px;font-size:11px;color:#555;font-weight:bold">0</div>

<div class="t" style="left:1685px;top:491px;font-size:11px;color:#888">09/06/2021</div>

<div class="t" style="left:1748px;top:491px;font-size:11.5px;color:#145f9b">SO-0047113</div>

<div class="t" style="left:1853px;top:491px;font-size:11px;color:#222">$281.15</div>

<div class="dd">
<div class="ddi" style="top:12px">PRINT CASES</div>
<div class="ddi" style="top:37px">PRINT GROUPED CASES</div>
<div class="ddi" style="top:62px">PRINT GENERIC LABEL</div>
<div class="ddi" style="top:87px;color:#c8c8c8">PRINT LABELS</div>
<div class="a" style="left:0;top:104px;width:155px;height:25px;background:#0b5b93"></div>
<div class="ddi" style="top:112px;color:#fff">PRINT CARTONS</div>
<div class="t" style="left:38px;top:137px;font-size:11.5px;color:#c8c8c8">PRINT</div>
</div>
<div class="a" style="left:1832px;top:289px;width:83px;height:24px;background:#f0f0f0;border:1px solid #a0a0a0;font-size:11.5px;color:#222;line-height:22px;padding-left:7px;white-space:nowrap">Print Cartons</div>
<div class="a" style="left:1739px;top:242px;width:186px;height:80px;border:4px solid #f05340;box-shadow:2px 3px 4px rgba(0,0,0,0.75), inset 3px 3px 4px rgba(0,0,0,0.75)"></div>
<div id="pp" class="a"></div>
<svg class="a" style="left:661px;top:330px" width="16" height="16" viewBox="0 0 16 16"><rect x="0" y="0" width="16" height="16" rx="1.5" fill="#7cc6ec"/><rect x="5.5" y="2.2" width="5" height="4.5" fill="#fff"/><path d="M2.5 10.5L4.5 6.5H11.5L13.5 10.5V13H2.5Z" fill="#d8effa"/><rect x="2.5" y="9" width="11" height="4" fill="#fff"/><rect x="4.5" y="11" width="7" height="0.8" fill="#7cc6ec"/></svg>
<div class="t" style="left:682px;top:333px;font-size:12px;color:#666">Print Preview</div>

<div class="a" style="left:997px;top:338px;width:10px;height:1px;background:#777"></div>
<div class="a" style="left:1043px;top:333px;width:10px;height:10px;border:1px solid #777"></div>
<svg class="a" style="left:1088px;top:333px" width="11" height="11"><path d="M0.5 0.5L10.5 10.5M10.5 0.5L0.5 10.5" stroke="#777" stroke-width="1.1"/></svg>
<div class="a" style="left:664px;top:365px;width:2px;height:15px;background:repeating-linear-gradient(#555 0 1px,transparent 1px 2px)"></div>
<svg class="a" style="left:676px;top:362px" width="30" height="22" viewBox="0 0 30 22"><path d="M0 1Q0 0 1 0H9L10 3H24V7H6L1 21H0Z" fill="#dfba8f"/><path d="M7 9.5H30L24 22H1Z" fill="#d4a373"/></svg>
<svg class="a" style="left:717px;top:362px" width="24" height="24" viewBox="0 0 24 24"><rect x="0" y="0" width="24" height="24" fill="#666"/><rect x="6" y="0" width="10" height="7.5" fill="#f7f7f7"/><rect x="7.5" y="1.8" width="2.3" height="4.2" fill="#666"/><rect x="3.7" y="13.5" width="16.6" height="6.5" fill="#f7f7f7"/></svg>
<div class="a" style="left:753px;top:357px;width:1px;height:35px;background:#d4d4d4"></div>
<svg class="a" style="left:766px;top:360px" width="22" height="28" viewBox="0 0 22 28"><path d="M1.5 2V26.5H20.5V2" fill="none" stroke="#ecdcc8" stroke-width="3"/><path d="M6 4.5Q6 2.5 8 2.5H9Q9 0 11 0Q13 0 13 2.5H14Q16 2.5 16 4.5V5.5H6Z" fill="#c8c8c8"/><text x="11" y="19" font-size="10" font-weight="bold" text-anchor="middle" fill="#c8c8c8" font-family="Liberation Sans">?</text></svg>
<svg class="a" style="left:800px;top:361px" width="33" height="28" viewBox="0 0 33 28"><path d="M1.5 8.5V1.5H26.5V10M1.5 8.5H18" fill="none" stroke="#b8cadb" stroke-width="2"/><path d="M1.5 13V21H18M1.5 13H18" fill="none" stroke="#b8cadb" stroke-width="2"/><path d="M21 10L32 20H26L29 27L26.5 28L23.5 21L21 25Z" fill="#c8c8c8"/></svg>
<svg class="a" style="left:842px;top:362px" width="28" height="24" viewBox="0 0 28 24"><circle cx="6" cy="18" r="4.6" fill="none" stroke="#666" stroke-width="2.8"/><circle cx="22" cy="18" r="4.6" fill="none" stroke="#666" stroke-width="2.8"/><path d="M0.5 17L4.5 2Q5 0 7 0H9Q10.5 0 10.5 2V15H1Z" fill="#666"/><path d="M27.5 17L23.5 2Q23 0 21 0H19Q17.5 0 17.5 2V15H27Z" fill="#666"/><rect x="10" y="6" width="8" height="6" fill="#666"/></svg>
<div class="a" style="left:880px;top:357px;width:1px;height:35px;background:#d4d4d4"></div>
<svg class="a" style="left:891px;top:360px" width="28" height="28" viewBox="0 0 28 28"><rect x="6.8" y="1.2" width="14.4" height="9" fill="none" stroke="#666" stroke-width="2.4"/><rect x="0" y="8.5" width="28" height="15.5" rx="2" fill="#666"/><rect x="6.8" y="17.2" width="14.4" height="9.6" fill="#fff" stroke="#666" stroke-width="2.4"/></svg>
<svg class="a" style="left:928px;top:360px" width="32" height="30" viewBox="0 0 32 30"><rect x="6.8" y="1.2" width="14.4" height="9" fill="none" stroke="#666" stroke-width="2.4"/><rect x="0" y="8.5" width="26" height="15.5" rx="2" fill="#666"/><rect x="6.8" y="17.2" width="14.4" height="9.6" fill="#fff" stroke="#666" stroke-width="2.4"/><path d="M24 14L17 23H22L19 30L31 19H25L28 14Z" fill="#dba870" stroke="#f7f7f7" stroke-width="0.8"/></svg>
<svg class="a" style="left:971px;top:360px" width="24" height="28" viewBox="0 0 24 28"><rect x="1" y="1" width="22" height="26" fill="none" stroke="#666" stroke-width="2"/><path d="M7 1v26M17 1v26M1 7h22M1 21h22" stroke="#3b6ea5" stroke-width="1.8"/></svg>
<svg class="a" style="left:1008px;top:360px" width="28" height="28" viewBox="0 0 28 28"><rect x="1" y="1" width="26" height="26" fill="none" stroke="#666" stroke-width="2"/><path d="M8 8l12.5 12" stroke="#3b6ea5" stroke-width="2.6"/><path d="M4.5 4.5h8l-8 7.5z M23.5 23.5h-8l8-7.5z" fill="#3b6ea5"/></svg>
<div class="a" style="left:1046px;top:357px;width:1px;height:35px;background:#d4d4d4"></div>
<svg class="a" style="left:1059px;top:364px" width="24" height="21" viewBox="0 0 24 21"><rect x="0" y="0" width="3.6" height="20" rx="1" fill="#bccde0"/><path d="M22 0v20L6 10z" fill="#bccde0" stroke="#bccde0" stroke-linejoin="round"/></svg>
<svg class="a" style="left:1101px;top:384px" width="7" height="7"><path d="M7 0v7H0z" fill="#333"/></svg>
<div id="page" class="a"></div>
<div class="a" style="left:713px;top:402px;width:1px;height:530px;background:repeating-linear-gradient(#c8c8c8 0 4px,transparent 4px 7px)"></div>
<div class="a" style="left:1058px;top:402px;width:1px;height:530px;background:repeating-linear-gradient(#c8c8c8 0 4px,transparent 4px 7px)"></div>
<div class="a" style="left:695px;top:420px;width:382px;height:1px;background:repeating-linear-gradient(90deg,#c8c8c8 0 4px,transparent 4px 7px)"></div>
<div class="pt" style="left:715px;top:420px">From: ALWAZONSALE</div>
<div class="pt" style="left:715px;top:434px">31 INDUSTRIAL AVE STE 4</div>
<div class="pt" style="left:715px;top:448px">NJ, 07430, US</div>
<div class="pt" style="left:888px;top:420.0px">To: 0</div>
<div class="pt" style="left:888px;top:433.8px">606 West 57th Street</div>
<div class="pt" style="left:888px;top:447.6px">10</div>
<div class="pt" style="left:888px;top:461.4px">New York, NY, 10019, US,</div>
<div class="pt" style="left:888px;top:475.2px">tel: 111,</div>
<div class="pt" style="left:888px;top:489.0px">222</div>
<div class="pb" style="left:715px;top:512px">SO#: SO-0047113</div>
<div class="pb" style="left:715px;top:536px">Customer PO#:</div>
<div class="pb" style="left:715px;top:578px;font-size:12.5px;letter-spacing:0.4px">Box 3</div>
<div class="pb" style="left:715px;top:600px;font-size:12.5px;letter-spacing:0.8px">Item 1</div>
<div class="pb" style="left:776px;top:600px;font-size:12.5px;letter-spacing:0.6px">011</div>
<div class="pb" style="left:715px;top:619px;font-size:12.5px;letter-spacing:0.8px">Item 2</div>
<div class="pb" style="left:776px;top:619px;font-size:12.5px;letter-spacing:0.6px">022 / 1</div>
<div class="pt" style="left:897px;top:599px">- Qty: 1 - Cases: 1/7</div>
<div class="pt" style="left:897px;top:618px">- Qty: 1 - Cases: 1/7</div>
<div class="a" style="left:661px;top:934px;width:451px;height:25px;background:#f0f0f0;border-top:1px solid #c6c6c6"></div>
<div class="t" style="left:665px;top:942px;font-size:11.5px;color:#333">Page:</div>

<div class="a" style="left:696px;top:939px;width:30px;height:18px;background:#fff;border:1px solid #c8c8c8;font-size:11.5px;color:#333;text-align:center;line-height:16px">1</div>
<div class="t" style="left:730px;top:942px;font-size:11.5px;color:#333">/ 1</div>

<div class="t" style="left:926px;top:942px;font-size:11.5px;color:#333">100%</div>

<div class="a" style="left:962px;top:945px;width:8px;height:2px;background:#333"></div>
<div class="a" style="left:975px;top:944px;width:116px;height:2px;background:#b4b4b4"></div>
<div class="a" style="left:1031px;top:939px;width:5px;height:13px;background:#444"></div>
<div class="a" style="left:978px;top:953px;width:1px;height:3px;background:#aaa"></div>
<div class="a" style="left:1088px;top:953px;width:1px;height:3px;background:#aaa"></div>
<svg class="a" style="left:1096px;top:941px" width="8" height="8"><path d="M4 0v8M0 4h8" stroke="#333" stroke-width="1.8"/></svg>
</body></html>
